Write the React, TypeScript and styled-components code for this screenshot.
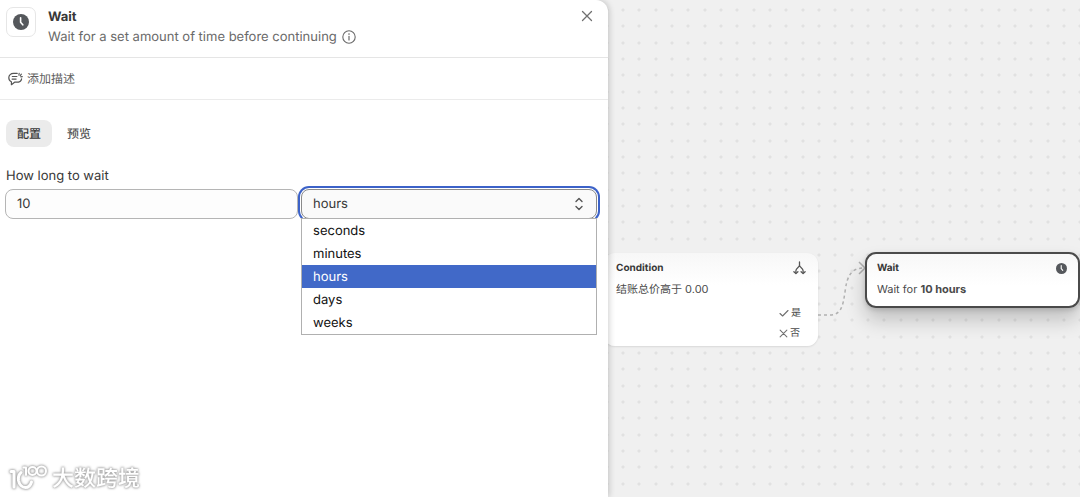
import React, { useState } from "react";
import styled, { createGlobalStyle, css } from "styled-components";

const GlobalStyle = createGlobalStyle`
  *, *::before, *::after { box-sizing: border-box; }
  body {
    margin: 0;
    background: #f0f0f0;
    color: #383838;
    font-family: Inter, "Noto Sans CJK SC", sans-serif;
    font-size: 13px;
    line-height: 20px;
    text-rendering: geometricPrecision;
  }
  h1, h2, p, ul { margin: 0; padding: 0; }
  button, input, select { font: inherit; color: inherit; text-rendering: inherit; }
`;

const dotOffsets = [0, 16, 33];
const dotLayers = dotOffsets.flatMap((x) =>
  dotOffsets.map(
    (y) => `radial-gradient(circle at 2px 2px, #e1e1e1 1px, transparent 2px) ${x + 13}px ${y + 8}px / 49px 49px`
  )
);

const Page = styled.div`
  display: grid;
  grid-template-columns: 76fr 59fr;
  min-height: 100vh;
`;

const Panel = styled.aside`
  position: relative;
  z-index: 2;
  background: #fff;
  border-top-right-radius: 12px;
  box-shadow: 1px 0 6px rgba(0, 0, 0, 0.2);
`;

const Header = styled.header`
  display: flex;
  align-items: flex-start;
  gap: 12px;
  padding: 7px 12px 10px 6px;
  border-bottom: 1px solid #e5e5e5;
`;

const IconTile = styled.span`
  display: grid;
  place-items: center;
  width: 30px;
  height: 30px;
  border: 1px solid #e6e6e6;
  border-radius: 7px;
`;

const Heading = styled.div`
  flex: 1;
`;

const Title = styled.h1`
  font-size: 13px;
  font-weight: 650;
  line-height: 20px;
`;

const Subtitle = styled.p`
  display: flex;
  align-items: center;
  gap: 5px;
  color: #6a6a6a;
`;

const IconButton = styled.button`
  display: grid;
  place-items: center;
  width: 18px;
  height: 18px;
  padding: 0;
  border: 0;
  background: none;
`;

const DescriptionButton = styled.button`
  display: flex;
  align-items: center;
  gap: 4px;
  width: 100%;
  height: 42px;
  padding: 1px 8px 0;
  border: 0;
  border-bottom: 1px solid #ebebeb;
  background: none;
  color: #616161;
  font-size: 12px;
  text-align: left;
`;

const PanelBody = styled.div`
  padding: 20px 11px 20px 5px;
`;

const Tabs = styled.div`
  display: flex;
  gap: 4px;
  padding-left: 1px;
`;

const Tab = styled.button<{ $active?: boolean }>`
  height: 27px;
  padding: 0 11px;
  border: 0;
  border-radius: 8px;
  background: ${(p) => (p.$active ? "#ebebeb" : "transparent")};
  color: ${(p) => (p.$active ? "#383838" : "#555")};
  font-size: 12px;
  font-weight: 500;
`;

const Label = styled.label`
  display: block;
  margin-top: 19px;
  padding-left: 1px;
`;

const Fields = styled.div`
  display: grid;
  grid-template-columns: 99fr 100fr;
  gap: 3px;
  margin-top: 3px;
`;

const fieldStyle = css`
  width: 100%;
  height: 30px;
  padding: 0 11px;
  border: 1px solid #b5b5b5;
  border-radius: 8px;
  background: #fdfdfd;
  outline: 0;
`;

const NumberInput = styled.input`
  ${fieldStyle}
`;

const SelectWrap = styled.div`
  position: relative;
`;

const UnitSelect = styled.select`
  ${fieldStyle}
  display: block;
  appearance: none;
  border-color: #8a8a8a;
  background: #fafafa;
  box-shadow: 0 0 0 1px #fff, 0 0 0 3px #3c62c8;
`;

const SelectArrows = styled.span`
  position: absolute;
  top: 7px;
  right: 13px;
  height: 16px;
  pointer-events: none;
`;

const Menu = styled.ul`
  position: absolute;
  top: 29px;
  left: 0;
  right: 0;
  border: 1px solid #b0b0b0;
  background: #fff;
  list-style: none;
`;

const MenuItem = styled.li<{ $selected: boolean }>`
  height: 23px;
  padding: 0 11px;
  line-height: 25px;
  color: ${(p) => (p.$selected ? "#fff" : "#111")};
  background: ${(p) => (p.$selected ? "#4169c8" : "transparent")};
`;

const Canvas = styled.main`
  position: relative;
  overflow: hidden;
  background: ${dotLayers.join(", ")}, #f0f0f0;
`;

const Node = styled.section<{ $x: number; $y: number; $selected?: boolean }>`
  position: absolute;
  left: ${(p) => p.$x}px;
  top: ${(p) => p.$y}px;
  width: ${(p) => (p.$selected ? "215px" : "214px")};
  padding: ${(p) => (p.$selected ? "4px 11px 7px 10px" : "5px 12px 2px")};
  border-radius: 11px;
  background: linear-gradient(#f7f7f7, #fff 32px);
  font-size: 11px;
  color: #4a4a4a;
  ${(p) =>
    p.$selected
      ? css`
          border: 2px solid #4a4a4a;
          box-shadow: 0 12px 20px rgba(0, 0, 0, 0.2), 0 2px 5px rgba(0, 0, 0, 0.15);
        `
      : css`
          box-shadow: 0 1px 2px rgba(0, 0, 0, 0.1);
        `}
`;

const NodeHeader = styled.div`
  display: flex;
  align-items: center;
  justify-content: space-between;
  height: 20px;
`;

const NodeTitle = styled.h2`
  font-size: 10px;
  font-weight: 650;
  color: #383838;
`;

const NodeText = styled.p`
  padding-top: 1px;
`;

const Outcomes = styled.ul`
  display: grid;
  justify-content: end;
  padding: 4px 5px 1px 0;
  list-style: none;
  font-size: 10px;
`;

const Outcome = styled.li`
  display: flex;
  align-items: center;
  gap: 2px;
`;

const Connector = styled.svg`
  position: absolute;
  left: 210px;
  top: 258px;
`;

const Watermark = styled.div`
  position: fixed;
  z-index: 3;
  left: 9px;
  bottom: 3px;
  display: flex;
  align-items: center;
  gap: 4px;
  color: #fff;
  font-size: 22px;
  font-weight: 500;
  line-height: 30px;
  filter: drop-shadow(0 0 1px #aaa) drop-shadow(0 0 1px #aaa);
`;

const ClockIcon = ({ size }: { size: number }) => (
  <svg width={size} height={size} viewBox="0 0 16 16" aria-hidden="true">
    <circle cx="8" cy="8" r="8" fill="#55585c" />
    <path d="M7.6 3.8v4.4l2.2 2.6" fill="none" stroke="#fff" strokeWidth="1.6" strokeLinecap="round" strokeLinejoin="round" />
  </svg>
);

const InfoIcon = () => (
  <svg width="14" height="14" viewBox="0 0 14 14" fill="none" stroke="#6a6a6a" strokeLinecap="round" aria-hidden="true">
    <circle cx="7" cy="7" r="6.2" strokeWidth="1.1" />
    <path d="M7 6.4v3.6" strokeWidth="1.2" />
    <circle cx="7" cy="4.1" r=".8" fill="#6a6a6a" stroke="none" />
  </svg>
);

const CrossIcon = ({ size, width }: { size: number; width: number }) => (
  <svg width={size} height={size} viewBox="0 0 12 12" fill="none" stroke="#707070" strokeWidth={width} strokeLinecap="round" aria-hidden="true">
    <path d="M1.5 1.5l9 9M10.5 1.5l-9 9" />
  </svg>
);

const NoteIcon = () => (
  <svg width="15" height="15" viewBox="0 0 15 15" fill="none" stroke="#555" strokeWidth="1.2" strokeLinecap="round" strokeLinejoin="round" aria-hidden="true">
    <path d="M9.2 1.4H5.6C2.8 1.4.8 3.2.8 5.8c0 1.9 1 3.3 2.6 3.9v3l3.2-2.5h1.8c2.9 0 4.9-1.3 5.2-3.4" />
    <path d="M4.3 4.5h4.6M4.1 7.1h4" />
    <path d="M10.9 3.2l.3-2M12.2 3.6l1.2-1.5M12.8 4.9l1.5-.3" strokeWidth="1.1" />
  </svg>
);

const ArrowsIcon = () => (
  <svg width="10" height="16" viewBox="0 0 10 16" fill="none" stroke="#555" strokeWidth="1.4" strokeLinecap="round" strokeLinejoin="round" aria-hidden="true">
    <path d="M2 5.5l3-3 3 3M2 10.5l3 3 3-3" />
  </svg>
);

const BranchIcon = () => (
  <svg width="13" height="14" viewBox="0 0 13 14" fill="none" stroke="#555" strokeWidth="1.3" strokeLinecap="round" strokeLinejoin="round" aria-hidden="true">
    <path d="M6.5 1v3.3C6.5 6.3 2.9 6.8 2.9 9.8V12M6.5 4.3c0 2 3.6 2.500 3.6 5.500V12" />
    <path d="M.9 10.7l2 1.9 2-1.9M8.1 10.7l2 1.9 2-1.9" />
  </svg>
);

const CheckIcon = () => (
  <svg width="10" height="10" viewBox="0 0 10 10" fill="none" stroke="#707070" strokeWidth="1.1" strokeLinecap="round" strokeLinejoin="round" aria-hidden="true">
    <path d="M1 5.5l2.6 2.5L9 2.5" />
  </svg>
);

const BrandIcon = () => (
  <svg width="39" height="30" viewBox="0 0 39 30" fill="none" stroke="#fff" strokeWidth="3" strokeLinecap="round" strokeLinejoin="round" aria-hidden="true">
    <path d="M2 7.5h3V23" />
    <path d="M12 8.5c-2 2-3 5-2.5 8 .8 4 3.5 7 7 7 3 0 5-2 6-5.5" />
    <path d="M14.5 3.5h2.5V11" strokeWidth="2" />
    <circle cx="23.5" cy="7" r="4" strokeWidth="2" />
    <circle cx="32.5" cy="7" r="4.5" strokeWidth="2" />
  </svg>
);

const units = ["seconds", "minutes", "hours", "days", "weeks"];

export default function App() {
  const [amount, setAmount] = useState("10");
  const [unit, setUnit] = useState("hours");

  return (
    <>
      <GlobalStyle />
      <Page>
        <Panel>
          <Header>
            <IconTile><ClockIcon size={16} /></IconTile>
            <Heading>
              <Title>Wait</Title>
              <Subtitle>Wait for a set amount of time before continuing <InfoIcon /></Subtitle>
            </Heading>
            <IconButton type="button" aria-label="Close"><CrossIcon size={12} width={1.3} /></IconButton>
          </Header>
          <DescriptionButton type="button"><NoteIcon />添加描述</DescriptionButton>
          <PanelBody>
            <Tabs role="tablist">
              <Tab type="button" role="tab" aria-selected="true" $active>配置</Tab>
              <Tab type="button" role="tab" aria-selected="false">预览</Tab>
            </Tabs>
            <Label htmlFor="amount">How long to wait</Label>
            <Fields>
              <NumberInput id="amount" inputMode="numeric" value={amount} onChange={(e) => setAmount(e.target.value)} />
              <SelectWrap>
                <UnitSelect aria-label="Unit" value={unit} onChange={(e) => setUnit(e.target.value)}>
                  {units.map((u) => <option key={u}>{u}</option>)}
                </UnitSelect>
                <SelectArrows><ArrowsIcon /></SelectArrows>
                <Menu role="listbox" aria-label="Unit options">
                  {units.map((u) => (
                    <MenuItem key={u} role="option" aria-selected={u === unit} $selected={u === unit} onClick={() => setUnit(u)}>
                      {u}
                    </MenuItem>
                  ))}
                </Menu>
              </SelectWrap>
            </Fields>
          </PanelBody>
        </Panel>
        <Canvas>
          <Connector width="50" height="62" viewBox="0 0 50 62" fill="none" stroke="#b0b0b0" strokeWidth="1.5">
            <path d="M0 57h12C23 57 25 48 27 34C29 18 33 10 46 10" strokeDasharray="3 3" />
            <path d="M41 4l6 6-6 6" />
          </Connector>
          <Node $x={-4} $y={253}>
            <NodeHeader><NodeTitle>Condition</NodeTitle><BranchIcon /></NodeHeader>
            <NodeText>结账总价高于 0.00</NodeText>
            <Outcomes>
              <Outcome><CheckIcon />是</Outcome>
              <Outcome><CrossIcon size={9} width={1.4} />否</Outcome>
            </Outcomes>
          </Node>
          <Node $x={257} $y={252} $selected>
            <NodeHeader><NodeTitle>Wait</NodeTitle><ClockIcon size={11} /></NodeHeader>
            <NodeText>Wait for <strong>10 hours</strong></NodeText>
          </Node>
        </Canvas>
      </Page>
      <Watermark><BrandIcon />大数跨境</Watermark>
    </>
  );
}
